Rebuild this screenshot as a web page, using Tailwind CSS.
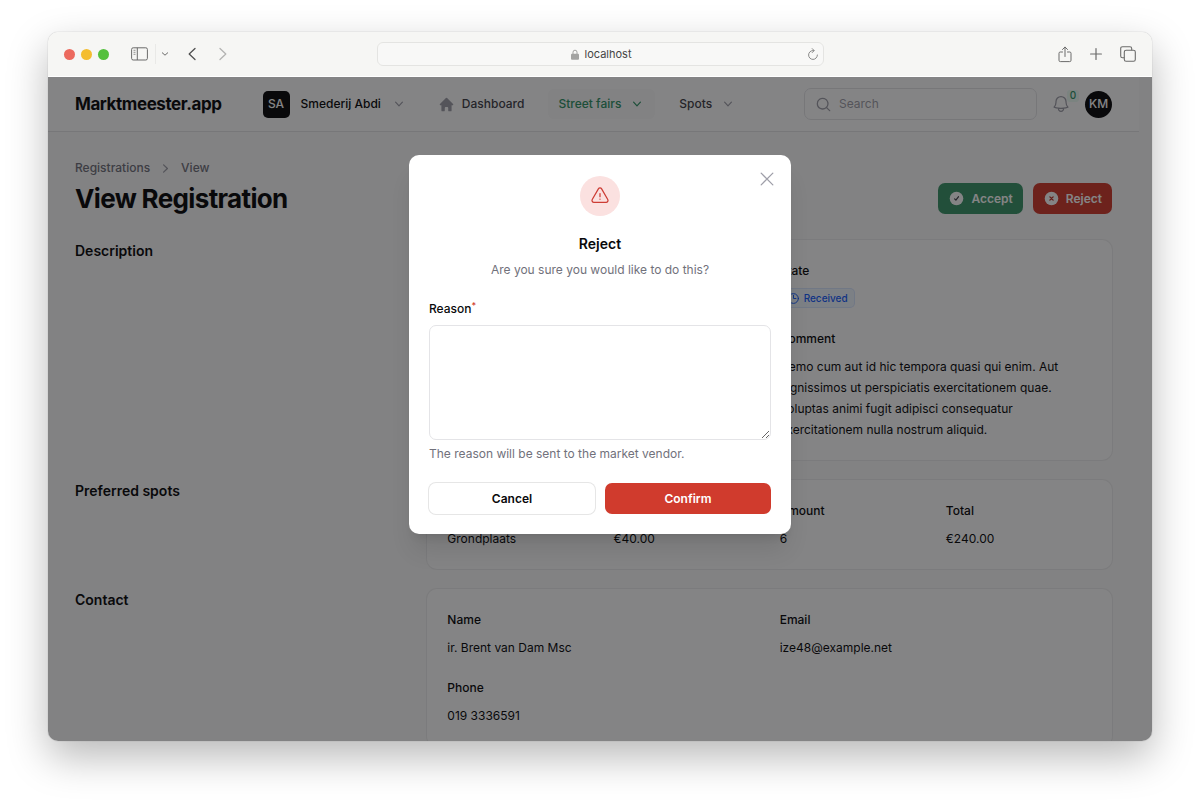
<!DOCTYPE html>
<html lang="en">
<head>
    <meta charset="UTF-8">
    <meta name="viewport" content="width=device-width, initial-scale=1.0">
    <title>View Registration - Marktmeester.app</title>
    <script src="https://cdn.jsdelivr.net/npm/@tailwindcss/browser@4"></script>
</head>
<body class="h-screen overflow-hidden bg-white px-12 pt-8 pb-16 font-['Inter',sans-serif] text-xs text-zinc-950 antialiased">

    <div class="flex h-full flex-col overflow-hidden rounded-[10px] shadow-[0_0_1px_rgba(0,0,0,0.4),0_16px_40px_rgba(0,0,0,0.28)]">

        <!-- Browser toolbar -->
        <div class="grid h-[45px] shrink-0 grid-cols-[1fr_minmax(0,447px)_1fr] items-center border-b border-white bg-[#f6f6f4] text-[#6b6b6a]">
            <div class="flex items-center pl-4">
                <div class="flex gap-[6px]">
                    <span class="size-[11px] rounded-full bg-[#ec6a5e]"></span>
                    <span class="size-[11px] rounded-full bg-[#f4bd30]"></span>
                    <span class="size-[11px] rounded-full bg-[#54c03c]"></span>
                </div>
                <button type="button" aria-label="Sidebar" class="ml-[22px]">
                    <svg class="h-[14px] w-[17px]" viewBox="0 0 17 14" fill="none" stroke="currentColor">
                        <rect x=".6" y=".8" width="15.8" height="12.2" rx="1.6" />
                        <path d="M6.3.8V13" />
                        <path d="M2.5 3.3h2M2.5 5.3h2M2.5 7.3h2" stroke-width=".7" />
                    </svg>
                </button>
                <span class="ml-[7px] h-5 w-px bg-[#e9e9e7]"></span>
                <button type="button" aria-label="Tab groups" class="ml-[5px]">
                    <svg class="size-[8px]" viewBox="0 0 8 8" fill="none" stroke="currentColor" stroke-linecap="round" stroke-linejoin="round"><path d="m1.3 2.8 2.7 2.4 2.7-2.4" /></svg>
                </button>
                <button type="button" aria-label="Back" class="ml-[19px] text-[#505050]">
                    <svg class="h-[14px] w-[8px]" viewBox="0 0 8 14" fill="none" stroke="currentColor" stroke-width="1.3" stroke-linecap="round" stroke-linejoin="round"><path d="M7 1.5 1.2 7 7 12.5" /></svg>
                </button>
                <button type="button" aria-label="Forward" class="ml-[23px] text-[#b3b3b2]">
                    <svg class="h-[14px] w-[8px]" viewBox="0 0 8 14" fill="none" stroke="currentColor" stroke-width="1.3" stroke-linecap="round" stroke-linejoin="round"><path d="m1 1.5 5.8 5.5L1 12.5" /></svg>
                </button>
            </div>
            <div class="flex h-6 items-center rounded-md border border-[#e4e4e2] bg-[#f8f8f7] px-1">
                <div class="flex flex-1 items-center justify-center gap-[6px] pl-[14px] text-[11px] text-[#454545]">
                    <svg class="h-[11px] w-[8px] text-[#a3a3a2]" viewBox="0 0 8 11"><path d="M2 5V3.2a2 2 0 0 1 4 0V5" fill="none" stroke="currentColor" /><rect y="4.7" width="8" height="6" rx="1" fill="currentColor" /></svg>
                    <span>localhost</span>
                </div>
                <button type="button" aria-label="Reload" class="text-[#8a8a89]">
                    <svg class="size-[12px]" viewBox="0 0 12 12" fill="none" stroke="currentColor" stroke-linecap="round" stroke-linejoin="round"><path d="M6.8 2.6H6A4.4 4.4 0 1 0 10.4 7M5.2.6l2 2-2 2" /></svg>
                </button>
            </div>
            <div class="flex items-center justify-end gap-[15px] pr-4">
                <button type="button" aria-label="Share">
                    <svg class="h-[17px] w-[14px]" viewBox="0 0 14 17" fill="none" stroke="currentColor" stroke-linecap="round" stroke-linejoin="round"><path d="M4.5 6H2.3C1.4 6 1 6.4 1 7.3v7c0 .9.4 1.3 1.3 1.3h9.4c.9 0 1.3-.4 1.3-1.3v-7C13 6.4 12.6 6 11.7 6H9.5M7 10.5V1.2M4.5 3.5 7 1l2.5 2.5" /></svg>
                </button>
                <button type="button" aria-label="New tab" class="ml-[3px]">
                    <svg class="size-[12px]" viewBox="0 0 12 12" fill="none" stroke="currentColor" stroke-width="1.2" stroke-linecap="round"><path d="M6 .6v10.8M.6 6h10.8" /></svg>
                </button>
                <button type="button" aria-label="Show tabs" class="ml-[3px]">
                    <svg class="size-[16px]" viewBox="0 0 16 16" fill="none" stroke="currentColor" stroke-width="1.1"><rect x="4.3" y="4.3" width="11" height="11" rx="1.8" /><path d="M4.3 11.7H2.5c-1.2 0-1.8-.6-1.8-1.8V2.5C.7 1.3 1.3.7 2.5.7h7.4c1.2 0 1.8.6 1.8 1.8v1.8" /></svg>
                </button>
            </div>
        </div>

        <!-- Application -->
        <div class="relative min-h-0 flex-1 overflow-hidden bg-zinc-50 pr-[13px]">
            <header class="flex h-[55px] items-center border-b border-zinc-200 bg-white px-[27px]">
                <a href="#" class="text-[17px] font-bold tracking-tight">Marktmeester.app</a>
                <button type="button" class="ml-[41px] flex items-center font-medium">
                    <span class="flex size-[27px] items-center justify-center rounded-[5px] bg-zinc-950 text-white">SA</span>
                    <span class="ml-[11px]">Smederij Abdi</span>
                    <svg class="ml-[10px] size-[16px] text-zinc-400" viewBox="0 0 20 20" fill="currentColor"><path fill-rule="evenodd" d="M5.23 7.21a.75.75 0 0 1 1.06.02L10 11.168l3.71-3.938a.75.75 0 1 1 1.08 1.04l-4.25 4.5a.75.75 0 0 1-1.08 0l-4.25-4.5a.75.75 0 0 1 .02-1.06Z" clip-rule="evenodd" /></svg>
                </button>
                <nav class="ml-[21px] flex items-center gap-[14px] font-medium text-zinc-700">
                    <a href="#" class="flex h-[30px] items-center gap-[7px] px-[10px]">
                        <svg class="size-[17px] text-zinc-400" viewBox="0 0 20 20" fill="currentColor"><path fill-rule="evenodd" d="M9.293 2.293a1 1 0 0 1 1.414 0l7 7A1 1 0 0 1 17 11h-1v6a1 1 0 0 1-1 1h-2a1 1 0 0 1-1-1v-3a1 1 0 0 0-1-1H9a1 1 0 0 0-1 1v3a1 1 0 0 1-1 1H5a1 1 0 0 1-1-1v-6H3a1 1 0 0 1-.707-1.707l7-7Z" clip-rule="evenodd" /></svg>
                        Dashboard
                    </a>
                    <button type="button" class="flex h-[30px] items-center gap-2 rounded-md bg-zinc-50 px-[10px] text-[#2f9366]">
                        Street fairs
                        <svg class="size-[16px]" viewBox="0 0 20 20" fill="currentColor"><path fill-rule="evenodd" d="M5.23 7.21a.75.75 0 0 1 1.06.02L10 11.168l3.71-3.938a.75.75 0 1 1 1.08 1.04l-4.25 4.5a.75.75 0 0 1-1.08 0l-4.25-4.5a.75.75 0 0 1 .02-1.06Z" clip-rule="evenodd" /></svg>
                    </button>
                    <button type="button" class="flex h-[30px] items-center gap-2 px-[10px]">
                        Spots
                        <svg class="size-[16px] text-zinc-400" viewBox="0 0 20 20" fill="currentColor"><path fill-rule="evenodd" d="M5.23 7.21a.75.75 0 0 1 1.06.02L10 11.168l3.71-3.938a.75.75 0 1 1 1.08 1.04l-4.25 4.5a.75.75 0 0 1-1.08 0l-4.25-4.5a.75.75 0 0 1 .02-1.06Z" clip-rule="evenodd" /></svg>
                    </button>
                </nav>
                <label class="ml-auto flex h-8 w-[233px] items-center gap-[7px] rounded-[7px] border border-zinc-200 pl-[10px] text-zinc-400">
                    <svg class="size-[17px] shrink-0" viewBox="0 0 20 20" fill="currentColor"><path fill-rule="evenodd" d="M9 3.5a5.5 5.5 0 1 0 0 11 5.5 5.5 0 0 0 0-11ZM2 9a7 7 0 1 1 12.452 4.391l3.328 3.329a.75.75 0 1 1-1.06 1.06l-3.329-3.328A7 7 0 0 1 2 9Z" clip-rule="evenodd" /></svg>
                    <input type="search" placeholder="Search" aria-label="Search" class="min-w-0 flex-1 outline-none placeholder:text-zinc-400">
                </label>
                <button type="button" aria-label="Notifications" class="relative ml-[14px] text-zinc-400">
                    <svg class="size-5" viewBox="0 0 24 24" fill="none" stroke="currentColor" stroke-width="1.5" stroke-linecap="round" stroke-linejoin="round"><path d="M14.857 17.082a23.848 23.848 0 0 0 5.454-1.31A8.967 8.967 0 0 1 18 9.75V9A6 6 0 0 0 6 9v.75a8.967 8.967 0 0 1-2.312 6.022c1.733.64 3.56 1.085 5.455 1.31m5.714 0a24.255 24.255 0 0 1-5.714 0m5.714 0a3 3 0 1 1-5.714 0" /></svg>
                    <span class="absolute -top-1 left-4 flex size-[12px] items-center justify-center rounded-[3px] bg-emerald-50 text-[10px] font-medium text-[#2f9366]">0</span>
                </button>
                <button type="button" class="ml-[14px] flex size-[27px] items-center justify-center rounded-full bg-zinc-950 font-medium text-white">KM</button>
            </header>

            <main class="px-[27px] pt-[26px]">
                <div class="flex items-end justify-between">
                    <div>
                        <nav aria-label="Breadcrumb" class="flex items-center gap-[7px] leading-5 font-medium text-zinc-500">
                            <a href="#">Registrations</a>
                            <svg class="size-[17px] text-zinc-400" viewBox="0 0 20 20" fill="currentColor"><path fill-rule="evenodd" d="M7.21 14.77a.75.75 0 0 1 .02-1.06L11.168 10 7.23 6.29a.75.75 0 1 1 1.04-1.08l4.5 4.25a.75.75 0 0 1 0 1.08l-4.5 4.25a.75.75 0 0 1-1.06-.02Z" clip-rule="evenodd" /></svg>
                            <a href="#">View</a>
                        </nav>
                        <h1 class="mt-[5px] text-[26px] leading-[32px] font-bold tracking-tight">View Registration</h1>
                    </div>
                    <div class="flex gap-[10px] pb-px font-semibold text-white">
                        <button type="button" class="flex h-[31px] items-center gap-[6px] rounded-[7px] bg-[#3b9468] px-[10px]">
                            <svg class="size-[17px]" viewBox="0 0 20 20" fill="none" stroke-linecap="round" stroke-linejoin="round"><circle cx="10" cy="10" r="8" fill="currentColor" /><path d="m7.8 10.4 1.5 1.5 3.1-4" class="stroke-zinc-700" stroke-width="1.4" /></svg>
                            Accept
                        </button>
                        <button type="button" class="flex h-[31px] items-center gap-[6px] rounded-[7px] bg-[#d03b2d] px-[10px]">
                            <svg class="size-[17px]" viewBox="0 0 20 20" fill="none" stroke-linecap="round" stroke-linejoin="round"><circle cx="10" cy="10" r="8" fill="currentColor" /><path d="m8.1 8.1 3.8 3.8M11.9 8.1l-3.8 3.8" stroke="#c0362a" stroke-width="1.6" /></svg>
                            Reject
                        </button>
                    </div>
                </div>

                <div class="mt-[25px] flex flex-col gap-5 leading-[21px]">
                    <section class="grid grid-cols-3 gap-5">
                        <h2 class="text-[14px] font-semibold">Description</h2>
                        <dl class="col-span-2 grid grid-cols-2 gap-x-5 gap-y-[19px] rounded-[10px] bg-white p-5 ring-1 ring-zinc-950/5">
                            <div class="col-start-2 flex flex-col gap-[7px]">
                                <dt class="font-medium">State</dt>
                                <dd class="flex h-[21px]">
                                    <span class="flex h-5 items-center gap-1 rounded-[5px] bg-blue-50 px-[7px] text-[10px] font-medium text-blue-600 ring-1 ring-blue-600/10 ring-inset">
                                        <svg class="size-[13px]" viewBox="0 0 24 24" fill="none" stroke="currentColor" stroke-width="1.8" stroke-linecap="round" stroke-linejoin="round"><path d="M12 6v6h4.5M21 12a9 9 0 1 1-18 0 9 9 0 0 1 18 0Z" /></svg>
                                        Received
                                    </span>
                                </dd>
                            </div>
                            <div class="col-start-2 flex flex-col gap-[7px]">
                                <dt class="font-medium">Comment</dt>
                                <dd>Nemo cum aut id hic tempora quasi qui enim. Aut dignissimos ut perspiciatis exercitationem quae. Voluptas animi fugit adipisci consequatur exercitationem nulla nostrum aliquid.</dd>
                            </div>
                        </dl>
                    </section>

                    <section class="grid grid-cols-3 gap-5">
                        <h2 class="text-[14px] font-semibold">Preferred spots</h2>
                        <dl class="col-span-2 grid grid-cols-4 gap-5 rounded-[10px] bg-white p-5 ring-1 ring-zinc-950/5">
                            <div class="flex flex-col gap-[7px]">
                                <dt class="font-medium">Spot</dt>
                                <dd>Grondplaats</dd>
                            </div>
                            <div class="flex flex-col gap-[7px]">
                                <dt class="font-medium">Price</dt>
                                <dd>€40.00</dd>
                            </div>
                            <div class="flex flex-col gap-[7px]">
                                <dt class="font-medium">Amount</dt>
                                <dd>6</dd>
                            </div>
                            <div class="flex flex-col gap-[7px]">
                                <dt class="font-medium">Total</dt>
                                <dd>€240.00</dd>
                            </div>
                        </dl>
                    </section>

                    <section class="grid grid-cols-3 gap-5">
                        <h2 class="text-[14px] font-semibold">Contact</h2>
                        <dl class="col-span-2 grid grid-cols-2 gap-x-5 gap-y-[19px] rounded-[10px] bg-white p-5 ring-1 ring-zinc-950/5">
                            <div class="flex flex-col gap-[7px]">
                                <dt class="font-medium">Name</dt>
                                <dd>ir. Brent van Dam Msc</dd>
                            </div>
                            <div class="flex flex-col gap-[7px]">
                                <dt class="font-medium">Email</dt>
                                <dd>ize48@example.net</dd>
                            </div>
                            <div class="flex flex-col gap-[7px]">
                                <dt class="font-medium">Phone</dt>
                                <dd>019 3336591</dd>
                            </div>
                        </dl>
                    </section>
                </div>
            </main>

            <!-- Reject modal -->
            <div class="absolute inset-0 flex items-start justify-center bg-zinc-950/50 pt-[78px]">
                <form role="dialog" aria-labelledby="modal-heading" class="relative w-full max-w-[382px] rounded-[10px] bg-white px-5 pt-[21px] pb-5 shadow-xl">
                    <button type="button" aria-label="Close" class="absolute top-[14px] right-[14px] text-zinc-400">
                        <svg class="size-5" viewBox="0 0 24 24" fill="none" stroke="currentColor" stroke-width="1.5" stroke-linecap="round" stroke-linejoin="round"><path d="M5 19 19 5M5 5l14 14" /></svg>
                    </button>
                    <div class="mx-auto flex size-10 items-center justify-center rounded-full bg-[#fbe1e0] text-[#cd3d35]">
                        <svg class="size-5" viewBox="0 0 24 24" fill="none" stroke="currentColor" stroke-width="1.5" stroke-linecap="round" stroke-linejoin="round"><path d="M12 9v3.75m-9.303 3.376c-.866 1.5.217 3.374 1.948 3.374h14.71c1.73 0 2.813-1.874 1.948-3.374L13.949 3.378c-.866-1.5-3.032-1.5-3.898 0L2.697 16.126ZM12 15.75h.007v.008H12v-.008Z" /></svg>
                    </div>
                    <h2 id="modal-heading" class="mt-[18px] text-center text-[14px] leading-5 font-semibold">Reject</h2>
                    <p class="mt-[6px] text-center leading-5 text-zinc-500">Are you sure you would like to do this?</p>
                    <label for="reason" class="mt-[19px] block leading-5 font-medium">Reason<sup class="text-[#d03b2d]">*</sup></label>
                    <textarea id="reason" required class="mt-[6px] block h-[115px] w-full rounded-[7px] border border-zinc-200 px-[10px] py-[6px] outline-none"></textarea>
                    <p class="mt-1 leading-5 text-zinc-500">The reason will be sent to the market vendor.</p>
                    <div class="mt-[19px] grid grid-cols-2 gap-[10px] font-semibold">
                        <button type="button" class="h-[31px] rounded-[7px] bg-white ring-1 ring-zinc-950/10">Cancel</button>
                        <button type="submit" class="h-[31px] rounded-[7px] bg-[#d03b2d] text-white">Confirm</button>
                    </div>
                </form>
            </div>
        </div>
    </div>

</body>
</html>
